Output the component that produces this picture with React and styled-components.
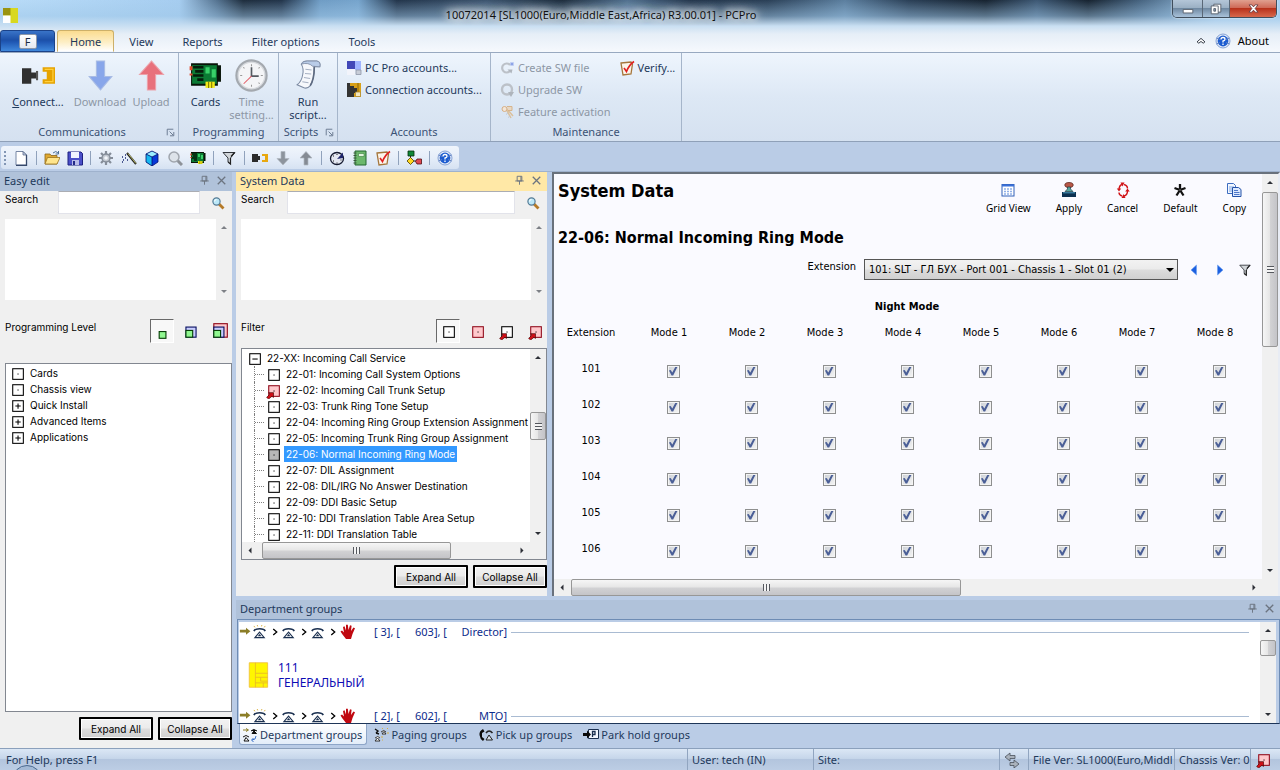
import React, { useState } from 'react'
import styled, { createGlobalStyle, css } from 'styled-components'

const tree = [
    { id: '22-01', name: 'Incoming Call System Options', mark: 'box' },
    { id: '22-02', name: 'Incoming Call Trunk Setup', mark: 'pinkLink' },
    { id: '22-03', name: 'Trunk Ring Tone Setup', mark: 'box' },
    { id: '22-04', name: 'Incoming Ring Group Extension Assignment', mark: 'box' },
    { id: '22-05', name: 'Incoming Trunk Ring Group Assignment', mark: 'box' },
    { id: '22-06', name: 'Normal Incoming Ring Mode', mark: 'greyBox' },
    { id: '22-07', name: 'DIL Assignment', mark: 'box' },
    { id: '22-08', name: 'DIL/IRG No Answer Destination', mark: 'box' },
    { id: '22-09', name: 'DDI Basic Setup', mark: 'box' },
    { id: '22-10', name: 'DDI Translation Table Area Setup', mark: 'box' },
    { id: '22-11', name: 'DDI Translation Table', mark: 'box' },
]

const easyItems = [
    ['Cards', 'box'],
    ['Chassis view', 'box'],
    ['Quick Install', 'plus'],
    ['Advanced Items', 'plus'],
    ['Applications', 'plus'],
]

const tools = [
    'page', '|', 'folder', 'save', '|', 'gear', 'wand', 'cube', 'lens', 'card', '|', 'funnel', '|',
    'plug', 'downGrey', 'upGrey', '|', 'clockBlue', 'book', 'verify', '|', 'flow', '|', 'help',
]

const extensions = [101, 102, 103, 104, 105, 106]
const modes = [1, 2, 3, 4, 5, 6, 7, 8]

const marker = (fill, stroke) => (
    <>
        <rect x="3.5" y="3.5" width="10" height="10" fill={fill} stroke={stroke} />
        <rect x="8" y="8" width="1" height="1" fill="#000" />
    </>
)
const linkArrow = <path d="M3.500 10h4.500v4.500L6.500 13.500 3.500 16 1.500 14.500 4.500 11.500z" fill="#d01018" stroke="#400" strokeWidth=".6" />
const phone = (
    <>
        <path d="M1 6.500Q2 4 7 4t6 2.500" fill="none" stroke="#1b3050" strokeWidth="1.800" />
        <path d="M7 7.500L2 13.500h10z" fill="#fff" stroke="#1b3050" strokeWidth="1.200" />
        <path d="M5 12l2-2.500L9 12z" fill="#1b3050" />
    </>
)

// every drawing sits on a 16x16 grid
const icons = {
    logo: (
        <>
            <path d="M0 0h16v16H0z" fill="#d8d820" />
            <path d="M0 0h8v8H0z" fill="#9a9410" />
            <path d="M0 8h8v8H0z" fill="#fff" />
        </>
    ),
    page: (
        <>
            <path d="M3 1.500h7l3.500 3.500v10H3z" fill="#fff" stroke="#7787a5" />
            <path d="M13.500 5v10.500H3" fill="none" stroke="#37496b" strokeWidth="1.300" />
            <path d="M10 1.500V5h3.500z" fill="#c5d0e5" stroke="#4b5c7e" strokeWidth=".7" />
        </>
    ),
    folder: (
        <>
            <path d="M1 4h5l1 1.500h6V14H1z" fill="#e0a830" stroke="#8a6416" strokeWidth=".8" />
            <path d="M3.500 7.500H16L13 14H1z" fill="#ffe58c" stroke="#9a7420" strokeWidth=".8" />
            <path d="M9 3q3-3 5 0M14.500 1v3h-3" fill="none" stroke="#4c7098" />
        </>
    ),
    save: (
        <>
            <path d="M1 2h13l1.500 1.500V15H1z" fill="#4a4fc8" stroke="#1d2080" />
            <path d="M4 2h8v6H4z" fill="#f0f4ff" />
            <path d="M5 10h7v5H5z" fill="#b8bce8" />
            <path d="M6 11h2v4H6z" fill="#222a88" />
        </>
    ),
    gear: (
        <>
            <path d="M8 1v14M1 8h14M3 3l10 10M13 3L3 13" stroke="#858d99" strokeWidth="2.200" />
            <circle cx="8" cy="8" r="4" fill="#c2c8d0" stroke="#858d99" strokeWidth="1.400" />
            <circle cx="8" cy="8" r="1.800" fill="#f3f6fb" />
        </>
    ),
    wand: (
        <>
            <path d="M6 3l9 11" stroke="#222" strokeWidth="2" />
            <path d="M7 3.500l8 10" stroke="#d8d870" strokeWidth=".8" />
            <path d="M4 5h1M1 7h1M4 8h1M2 10h1M6 10h1M1 12h1" stroke="#1a2a70" strokeWidth="1.300" />
        </>
    ),
    cube: (
        <>
            <path d="M8 1l6 3v8l-6 4-6-4V4z" fill="#0838d8" />
            <path d="M8 1l6 3-6 3-6-3z" fill="#9beeff" />
            <path d="M2 4l6 3v9l-6-4z" fill="#18b8f0" />
            <path d="M8 1l6 3v8l-6 4-6-4V4zM2 4l6 3 6-3M8 7v9" fill="none" stroke="#04106c" strokeWidth=".8" />
        </>
    ),
    lens: (
        <>
            <path d="M10 10l5 5" stroke="#8d9299" strokeWidth="3" />
            <circle cx="7" cy="7" r="5" fill="#dde3ea" stroke="#a0a6ae" strokeWidth="1.500" />
        </>
    ),
    search: (
        <>
            <path d="M9 9l4.500 4.500" stroke="#b57a28" strokeWidth="2.800" />
            <circle cx="6.500" cy="6.500" r="3.600" fill="#bce8f8" stroke="#557b95" strokeWidth="1.200" />
            <path d="M4.500 6.500q0-2 2-2" fill="none" stroke="#fff" />
        </>
    ),
    card: (
        <>
            <path d="M1 2h13v1h1.500v8H14v2H1z" fill="#081408" />
            <path d="M1.500 3h12v9h-12z" fill="#0b7a34" />
            <path d="M2 4h5M3 6h4M2 8h5M4 10h3" stroke="#041c0a" strokeWidth="1.300" />
            <path d="M8 4h2v3H8zM11 5h2v4h-2z" fill="#38d068" />
            <path d="M1 3.500v2M1 7v1" stroke="#e04828" strokeWidth="1.400" />
            <path d="M8 11h4.500v3H8z" fill="#f0e818" />
            <path d="M9.500 11v3M11 11v3" stroke="#807800" strokeWidth=".5" />
        </>
    ),
    funnel: (
        <>
            <path d="M2 2.500h12L9.500 8v6L7 12V8z" fill="#d2d6da" stroke="#32363c" />
            <path d="M9.500 8v6L7 12M10 6.500l3.500-4" fill="none" stroke="#222" strokeWidth="1.200" />
        </>
    ),
    plug: (
        <>
            <path d="M0 4h6v2h2v4H6v2H0z" fill="#2b2b2b" />
            <path d="M10 4h6v8h-6v-2h3V6h-3z" fill="#e8a810" />
        </>
    ),
    plugBig: (
        <>
            <path d="M0 4.500h4.500v2H7v3H4.500v2.500H0z" fill="#303030" />
            <path d="M6.800 5.800h1v4.500h-1z" fill="#555" />
            <path d="M10 4h6v8h-6V9.800h2V6.200h-2z" fill="#e6a300" />
            <path d="M11 5h4v6h-4" fill="none" stroke="#ffcf3c" strokeWidth=".6" />
        </>
    ),
    down: <path d="M6 1h4v7.500h3.500L8 15 2.500 8.500H6z" fill="#88a6ea" stroke="#a8bbe4" strokeWidth=".5" />,
    up: <path d="M6 15h4V7.500h3.800L8 1 2.200 7.500H6z" fill="#e8717c" stroke="#eca2aa" strokeWidth=".5" />,
    downGrey: <path d="M6 1.500h4v7h4L8 15 2 8.500h4z" fill="#8d949d" stroke="#b0b7c0" strokeWidth=".7" />,
    upGrey: <path d="M6 15h4V8h4L8 1.500 2 8h4z" fill="#858b94" stroke="#b0b7c0" strokeWidth=".7" />,
    clock: (
        <>
            <circle cx="8" cy="8" r="7.200" fill="#f4f5f7" stroke="#a4a9af" strokeWidth="1.300" />
            <circle cx="8" cy="8" r="6.500" fill="none" stroke="#d6d9dd" strokeWidth=".6" />
            <path d="M8 2.500v1M8 12.500v1M2.500 8h1M12.500 8h1M4 4l.6.6M12 4l-.6.600M12 12l-.6-.6" stroke="#999" strokeWidth=".5" />
            <path d="M8 4v4.300h3.500" fill="none" stroke="#555b62" strokeWidth=".8" />
            <path d="M8 8.300L4.200 12" stroke="#e25c66" strokeWidth=".5" />
        </>
    ),
    clockBlue: (
        <>
            <ellipse cx="8" cy="8.500" rx="6.500" ry="6" fill="#e4e8f2" stroke="#151a30" strokeWidth="1.300" />
            <path d="M8 9l6-6.500V8z" fill="#20266c" />
            <path d="M4 6h1M4 11h1M8 4v1M8 12.500v1M11.500 10h1" stroke="#222" />
        </>
    ),
    script: (
        <>
            <path d="M4.500 2.500Q5.500.8 7.500 1H12q2 .3 1.500 2.800h-2.700q0 6.200-2 9.200-1.500 1.700-3.300.8L2.500 12.500q2.200-1.700 2.700-5 .6-3-.7-5z" fill="#f6f8fc" stroke="#7d8ba3" strokeWidth=".5" />
            <path d="M4.500 2.500Q5.500.8 7.500 1H12q2 .3 1.500 2.800L10 3.500Q8 1.500 4.500 2.500z" fill="#b9cce8" stroke="#7d8ba3" strokeWidth=".4" />
            <path d="M10.800 3.800q0 6.200-2 9.200" fill="none" stroke="#5d6a80" strokeWidth=".8" />
            <path d="M6.500 5l3 .3M6.300 7l3 .3M5.800 9l3 .4M5 11l3 .5" stroke="#a6b0c2" strokeWidth=".5" />
        </>
    ),
    accounts: (
        <>
            <path d="M1 1h8v8H1z" fill="#4248b8" />
            <path d="M9 1h6v9H9z" fill="#9fb4ff" />
            <path d="M1 9h8v6H1z" fill="#f2f4fb" />
            <path d="M10 10h5v4.500h-5z" fill="#c8cdd8" stroke="#8f98a8" strokeWidth=".8" />
        </>
    ),
    connAccounts: (
        <>
            <path d="M1 1h14v14H1z" fill="#d8a018" />
            <path d="M1 1h3v3h4v2h3v5H8v4H1z" fill="#333" />
            <path d="M12 1v9" stroke="#8a6408" />
            <path d="M9.500 10h5v4.500h-5z" fill="#f3e7c0" stroke="#b08a2c" strokeWidth=".8" />
        </>
    ),
    swirl: (
        <>
            <path d="M11 5A4.500 4.500 0 1 0 11 11" fill="none" stroke="#bcc1c8" strokeWidth="2.200" />
            <path d="M8.500 9.500h5l-1 4z" fill="#b0b6be" />
            <path d="M13 2v4M11 4h4M11.600 2.600l2.800 2.800M14.400 2.600l-2.800 2.800" stroke="#8aa2e8" strokeWidth=".9" />
        </>
    ),
    upgrade: (
        <>
            <circle cx="8" cy="7.500" r="5" fill="none" stroke="#bcc1c8" strokeWidth="2.400" />
            <path d="M9 10h6l-3 5z" fill="#aeb4bc" />
        </>
    ),
    key: (
        <>
            <path d="M7 5l5 9M8 5l6 7" fill="none" stroke="#dbc09c" strokeWidth="1.500" />
            <path d="M8 2.500h5v4H9" fill="#e8d8c4" stroke="#d6b48c" />
            <circle cx="5.500" cy="5" r="2.500" fill="#f3e6d8" stroke="#d6ae84" />
            <path d="M9 9l-2 1.500M11 12l-2 1.500" stroke="#c4c8d0" />
        </>
    ),
    verify: (
        <>
            <path d="M2 3l10-1 1.500 2-1.500 10-8 1z" fill="#fbf4ea" stroke="#a5763c" strokeWidth="1.300" />
            <path d="M5 8l2.500 3.500Q10 5 15 1.500" fill="none" stroke="#e02020" strokeWidth="1.600" />
        </>
    ),
    book: (
        <>
            <path d="M3 1h11v14H3z" fill="#6cb86c" stroke="#246830" />
            <path d="M6.500 3.500h5.500v3H6.500z" fill="#e0f4dc" stroke="#3c8040" strokeWidth=".6" />
            <path d="M1.500 3h3M1.500 5.500h3M1.500 8h3M1.500 10.500h3M1.500 13h3" stroke="#3a5a3a" />
        </>
    ),
    flow: (
        <>
            <path d="M2 1h6v5H2z" fill="#108838" stroke="#06300e" strokeWidth=".8" />
            <path d="M4.500 6v4M8 11h3" stroke="#222" />
            <path d="M4.500 7.500L8 11l-3.500 3.500L1 11z" fill="#ffd820" stroke="#4a3a00" strokeWidth=".8" />
            <path d="M11 9h4.500v5H11L9.500 11.500z" fill="#e04850" stroke="#501014" strokeWidth=".8" />
        </>
    ),
    help: (
        <>
            <circle cx="8" cy="8" r="7" fill="#e4ecf8" stroke="#6f8fcc" strokeWidth=".8" />
            <circle cx="8" cy="8" r="5.400" fill="#1c5cd0" />
            <path d="M1.500 5L5 6.500M14.500 5L11 6.500M1.500 11L5 9.500M14.500 11L11 9.500" stroke="#5f81c4" />
            <path d="M6 6.500Q6 4.500 8 4.500t2 1.700Q10 7.500 8 8v1.500M8 10.500v1.500" fill="none" stroke="#fff" strokeWidth="1.300" />
        </>
    ),
    pin: (
        <>
            <path d="M5.500 3.500h5v5h-5zM9.500 3.500v5M3.500 8.500h9M8 8.500v4" fill="none" stroke="#6c7480" />
        </>
    ),
    close: <path d="M4 4l8 8M12 4l-8 8" stroke="#6c7480" strokeWidth="1.400" />,
    box: marker('#fff', '#000'),
    greyBox: marker('#b8b8b8', '#000'),
    pinkBox: marker('#ffc8cc', '#900818'),
    boxLink: <>{marker('#fff', '#000')}{linkArrow}</>,
    pinkLink: <>{marker('#ffc8cc', '#900818')}{linkArrow}</>,
    plus: (
        <>
            <rect x="3.500" y="3.500" width="10" height="10" fill="#fff" stroke="#000" />
            <path d="M6 8.500h5M8.500 6v5" stroke="#000" />
        </>
    ),
    minus: (
        <>
            <rect x="3.500" y="3.500" width="10" height="10" fill="#fff" stroke="#000" />
            <path d="M6 8.500h5" stroke="#000" />
        </>
    ),
    level1: <rect x="5.500" y="8.500" width="6" height="6" fill="#90f890" stroke="#064006" />,
    level2: (
        <>
            <rect x="3.500" y="4.500" width="9" height="9" fill="#c8ccff" stroke="#081060" />
            <rect x="3.500" y="7.500" width="6" height="6" fill="#90f890" stroke="#064006" />
        </>
    ),
    level3: (
        <>
            <rect x="2.500" y="1.500" width="12" height="12" fill="#ffc8cc" stroke="#900818" />
            <rect x="2.500" y="4.500" width="9" height="9" fill="#c8ccff" stroke="#081060" />
            <rect x="2.500" y="7.500" width="6" height="6" fill="#90f890" stroke="#064006" />
        </>
    ),
    grid: (
        <>
            <rect x="2" y="2.500" width="12" height="11.500" fill="#fff" stroke="#3060b8" />
            <path d="M2 3.500h12" stroke="#3a70d8" strokeWidth="2" />
            <path d="M4 7h2M7 7h2M10 7h2M4 9.500h2M7 9.500h2M10 9.500h2M4 12h2M7 12h2M10 12h2" stroke="#90b0e8" strokeWidth="1.300" />
        </>
    ),
    stamp: (
        <>
            <ellipse cx="8" cy="3" rx="4.200" ry="2.500" fill="#b85848" stroke="#501810" strokeWidth=".7" />
            <path d="M6.500 5h3v2l2.500 2.500H4L6.500 7z" fill="#58a8a0" stroke="#1c3844" strokeWidth=".7" />
            <path d="M1 10h14v5H1z" fill="#0c3050" />
            <path d="M2 10.800h12" stroke="#4c9cc0" />
        </>
    ),
    cycle: (
        <>
            <path d="M7 2.500Q4 3.500 4 8M9 2.500q3.500 1 3.500 4M7 14Q4 13 4 10.500M9 14q3.500-1 3.500-5" fill="none" stroke="#d01418" strokeWidth="1.400" />
            <path d="M5.500.5h4L7.500 4.500zM10.500 16H6.500l2-4zM1.800 6.500h4.400L4 9.500zM10.200 9.500h4.500l-2.200-3z" fill="#d01418" />
        </>
    ),
    star: (
        <>
            <path d="M8 7.500V2M8 8L2.500 6M8 8l5.500-2M8 8l-3.500 5.500M8 8l3.500 5.500" stroke="#111" strokeWidth="2.300" />
            <circle cx="8" cy="8" r=".8" fill="#888" />
        </>
    ),
    copy: (
        <>
            <path d="M1.500 1.500h6l2 2v8h-8z" fill="#f2f7ff" stroke="#3c6cc0" />
            <path d="M3 5h5M3 7h5M3 9h5" stroke="#7ea4e0" />
            <path d="M6.500 5.500h6l2.500 2v7H6.500z" fill="#dce9ff" stroke="#2452a8" />
            <path d="M8 8.500h4M8 10.500h5.500M8 12.500h5.500" stroke="#5078c8" />
        </>
    ),
    prev: <path d="M10.500 3v10L5 8z" fill="#1c60e0" stroke="#6ca0f0" strokeWidth=".6" />,
    next: <path d="M5.500 3v10L11 8z" fill="#1c60e0" stroke="#6ca0f0" strokeWidth=".6" />,
    launcher: (
        <path d="M4.500 11V4.500H11M7 7l4 4M11.500 7.500v4h-4" fill="none" stroke="#66768e" />
    ),
    chevron: <path d="M3.500 9L8 5l4.500 4-2 1.500L8 8.500l-2.500 2z" fill="#fff" stroke="#1d2430" />,
    minimise: <path d="M2.500 8.500h11v4h-11z" fill="#fff" stroke="#535c68" />,
    restore: (
        <>
            <path d="M5.500 2.500h8v9h-8z" fill="#fff" stroke="#535c68" />
            <path d="M2.500 4.500h8v9h-8z" fill="#fff" stroke="#535c68" />
            <path d="M5.500 7.500h2v3h-2z" fill="#8ba0b8" stroke="#535c68" />
        </>
    ),
    exit: <path d="M2.500 3.500H6l2 2.500 2-2.500h3.500L10 8l3.500 4.500H10L8 10l-2 2.500H2.500L6 8z" fill="#fff" stroke="#63343a" />,
    arrow: <path d="M1 5.500h7V3L13 7 8 11V8.500H1z" fill="#8c7e28" />,
    phone,
    ringing: (
        <>
            {phone}
            <path d="M2 2.500L1 1M5 1.500L4.500 0M9 1.500l.5-1.500M12 2.500L13 1" stroke="#d8b040" />
        </>
    ),
    hand: (
        <path d="M6 15L2.500 10.500.5 7.500 2 6.500l2 2L3 3l1.500-.8L6 6.500V.8h1.800L8.500 6 10 1.200l1.600.5L11 7l2.500-3.500 1.500.8L12.500 10 11 15z" fill="#c00810" />
    ),
    cardYellow: (
        <>
            <path d="M3 1h10.500v14H3z" fill="#fff600" stroke="#f0c040" strokeWidth=".5" />
            <path d="M6.500 1v14M6.500 7h7M6.500 9.300h7M9.500 9.300v2.200h4M6.500 12.500h7M11 12.500V15" fill="none" stroke="#e8b828" strokeWidth=".5" />
        </>
    ),
    dept: (
        <>
            <path d="M1 3h5M4 1.500L6.500 3 4 4.500" stroke="#8c7e28" fill="none" />
            <path d="M9 4q2.500-3 6 0M10 6.500L12 4l2.500 2.500z" fill="#111" stroke="#111" />
            <path d="M1 10q3-3 6 0M2 14l2-3.500L7 14z" fill="#fff" stroke="#111" />
            <path d="M14 9q0 4-4 4M11.500 11L9.500 13l2 2" fill="none" stroke="#3a70c8" />
        </>
    ),
    paging: (
        <>
            <path d="M2 2l3 2-2 2M6 7L3 6" fill="none" stroke="#111" strokeWidth="1.400" />
            <path d="M8 5q3-3 5 0M9 7l2-2.500L13 7z" fill="#fff" stroke="#333" />
            <path d="M2 11q3-3 5 0M2 14l2.500-3L7 14z" fill="#fff" stroke="#333" />
            <path d="M9 1l1 1M14 2l1-1M14 6h2M8 10h2M9 13h1" stroke="#d8b040" />
        </>
    ),
    pickup: (
        <>
            <path d="M5 2Q1 4 1.500 8T5 14l1.500-2L4 10V6l2.500-1.500z" fill="#0a0a0a" />
            <path d="M8 6q3-4 6.500 0" fill="none" stroke="#222" strokeWidth="1.500" />
            <path d="M11 8l-3 5h6.500z" fill="#d8e0ea" stroke="#222" />
        </>
    ),
    park: (
        <>
            <path d="M5.500 2.500h10v9h-10z" fill="#f4f8ff" stroke="#1b3050" />
            <path d="M9.500 10V4.500h2.500v3H9.500" fill="none" stroke="#1b3050" strokeWidth="1.300" />
            <path d="M0 6h4V3.500L8 7.500l-4 4V9H0z" fill="#0a0a0a" />
        </>
    ),
    swap: (
        <>
            <path d="M6 1v2.500h5v3H6V9L1 5z" fill="#aab2bc" stroke="#4a525c" strokeWidth=".8" />
            <path d="M10 8v2.500H6v3h4V16l5-4z" fill="#aab2bc" stroke="#4a525c" strokeWidth=".8" />
        </>
    ),
    gt: <path d="M6 4.500l4 3.500-4 3.500" fill="none" stroke="#000" strokeWidth="1.500" />,
}

function Icon({ name, size = 16 }) {
    return (
        <Svg viewBox="0 0 16 16" $size={size} aria-hidden="true">
            {icons[name]}
        </Svg>
    )
}

function Scroll({ horizontal, before = 0, thumb = 0, after = 0, grip, idle }) {
    return (
        <Bar $h={horizontal}>
            <Arrow $dir={horizontal ? 'left' : 'up'} $idle={idle} aria-label="Scroll back" />
            <Track $grow={before} />
            {thumb > 0 && <Thumb $h={horizontal} $grow={thumb}>{grip && <Grip $h={horizontal} />}</Thumb>}
            <Track $grow={after} />
            <Arrow $dir={horizontal ? 'right' : 'down'} $idle={idle} aria-label="Scroll forward" />
        </Bar>
    )
}

function DockHead({ title, active }) {
    return (
        <DockTitle $active={active}>
            <h2>{title}</h2>
            <IconButton aria-label={'Pin ' + title}><Icon name="pin" size={15} /></IconButton>
            <IconButton aria-label={'Close ' + title}><Icon name="close" size={15} /></IconButton>
        </DockTitle>
    )
}

function SearchBox({ id, left }) {
    return (
        <>
            <SearchRow $left={left}>
                <label htmlFor={id}>Search</label>
                <input id={id} type="text" />
                <IconButton aria-label="Search"><Icon name="search" /></IconButton>
            </SearchRow>
            <Results>
                <div />
                <Scroll idle after={1} />
            </Results>
        </>
    )
}

function Ribbon() {
    return (
        <RibbonBar>
            <Group $width={179}>
                <GroupBody>
                    <BigButton $width={62}><Icon name="plugBig" size={33} /><span><u>C</u>onnect...</span></BigButton>
                    <BigButton $width={62} disabled><Icon name="down" size={33} /><span>Download</span></BigButton>
                    <BigButton $width={40} disabled><Icon name="up" size={33} /><span>Upload</span></BigButton>
                </GroupBody>
                <GroupName $launch><span>Communications</span><IconButton aria-label="Communications options"><Icon name="launcher" size={15} /></IconButton></GroupName>
            </Group>
            <Group $width={100}>
                <GroupBody>
                    <BigButton $width={46}><Icon name="card" size={33} /><span>Cards</span></BigButton>
                    <BigButton $width={46} disabled><Icon name="clock" size={33} /><span>Time<br />setting...</span></BigButton>
                </GroupBody>
                <GroupName><span>Programming</span></GroupName>
            </Group>
            <Group $width={59}>
                <GroupBody>
                    <BigButton $width={50}><Icon name="script" size={33} /><span>Run<br />script...</span></BigButton>
                </GroupBody>
                <GroupName $launch><span>Scripts</span><IconButton aria-label="Script options"><Icon name="launcher" size={15} /></IconButton></GroupName>
            </Group>
            <Group $width={153}>
                <SmallColumns>
                    <div>
                        <SmallButton><Icon name="accounts" />PC Pro accounts...</SmallButton>
                        <SmallButton><Icon name="connAccounts" />Connection accounts...</SmallButton>
                    </div>
                </SmallColumns>
                <GroupName><span>Accounts</span></GroupName>
            </Group>
            <Group $width={191}>
                <SmallColumns>
                    <div>
                        <SmallButton disabled><Icon name="swirl" />Create SW file</SmallButton>
                        <SmallButton disabled><Icon name="upgrade" />Upgrade SW</SmallButton>
                        <SmallButton disabled><Icon name="key" />Feature activation</SmallButton>
                    </div>
                    <div>
                        <SmallButton><Icon name="verify" />Verify...</SmallButton>
                    </div>
                </SmallColumns>
                <GroupName><span>Maintenance</span></GroupName>
            </Group>
        </RibbonBar>
    )
}

function EasyEdit() {
    return (
        <LeftDock>
            <DockHead title="Easy edit" />
            <SearchBox id="easy-search" left={54} />
            <FilterRow>
                <span>Programming Level</span>
                <Toggle $on aria-label="Level 1"><Icon name="level1" size={18} /></Toggle>
                <Toggle aria-label="Level 2"><Icon name="level2" size={18} /></Toggle>
                <Toggle aria-label="Level 3"><Icon name="level3" size={18} /></Toggle>
            </FilterRow>
            <TreeFrame $top={20}>
                <TreeList>
                    {easyItems.map(([name, mark]) => (
                        <TreeItem key={name} $indent={3}><Icon name={mark} size={17} /><span>{name}</span></TreeItem>
                    ))}
                </TreeList>
            </TreeFrame>
            <ButtonRow>
                <PushButton>Expand All</PushButton>
                <PushButton>Collapse All</PushButton>
            </ButtonRow>
        </LeftDock>
    )
}

function SystemTree({ selected, onSelect }) {
    return (
        <TreeDock>
            <DockHead title="System Data" active />
            <SearchBox id="system-search" left={47} />
            <FilterRow>
                <span>Filter</span>
                <Toggle $on aria-label="All"><Icon name="box" size={17} /></Toggle>
                <Toggle aria-label="Changed"><Icon name="pinkBox" size={17} /></Toggle>
                <Toggle aria-label="Linked"><Icon name="boxLink" size={17} /></Toggle>
                <Toggle aria-label="Changed and linked"><Icon name="pinkLink" size={17} /></Toggle>
            </FilterRow>
            <TreeFrame $top={5}>
                <TreeView>
                    <TreeList>
                        <TreeItem $indent={4}><Icon name="minus" size={17} /><span>22-XX: Incoming Call Service</span></TreeItem>
                        {tree.map((t) => (
                            <TreeItem key={t.id} $indent={12} $selected={t.id === selected} onClick={() => onSelect(t.id)}>
                                <Stem />
                                <Icon name={t.mark} size={17} />
                                <span>{t.id}: {t.name}</span>
                            </TreeItem>
                        ))}
                    </TreeList>
                    <Scroll before={48} thumb={27} after={88} grip />
                </TreeView>
                <ScrollFoot><Scroll horizontal before={4} thumb={188} after={64} grip /><i /></ScrollFoot>
            </TreeFrame>
            <ButtonRow>
                <PushButton>Expand All</PushButton>
                <PushButton>Collapse All</PushButton>
            </ButtonRow>
        </TreeDock>
    )
}

function Editor() {
    return (
        <Main>
            <MainView>
                <Sheet>
                    <TopRow>
                        <h1>System Data</h1>
                        <Actions>
                            <button><Icon name="grid" />Grid View</button>
                            <button><Icon name="stamp" />Apply</button>
                            <button><Icon name="cycle" />Cancel</button>
                            <button><Icon name="star" />Default</button>
                            <button><Icon name="copy" />Copy</button>
                        </Actions>
                    </TopRow>
                    <PageName>22-06: Normal Incoming Ring Mode</PageName>
                    <Picker>
                        <label htmlFor="extension">Extension</label>
                        <SelectWrap>
                            <select id="extension">
                                <option>101: SLT - ГЛ БУХ - Port 001 - Chassis 1 - Slot 01 (2)</option>
                            </select>
                        </SelectWrap>
                        <Steps>
                            <IconButton aria-label="Previous"><Icon name="prev" /></IconButton>
                            <IconButton aria-label="Next"><Icon name="next" /></IconButton>
                            <IconButton aria-label="Filter"><Icon name="funnel" size={14} /></IconButton>
                        </Steps>
                    </Picker>
                    <ModeTable>
                        <thead>
                            <tr><ModeTitle colSpan={9}>Night Mode</ModeTitle></tr>
                            <tr>
                                <th scope="col">Extension</th>
                                {modes.map((m) => <th scope="col" key={m}>Mode {m}</th>)}
                            </tr>
                        </thead>
                        <tbody>
                            {extensions.map((ext) => (
                                <tr key={ext}>
                                    <th scope="row">{ext}</th>
                                    {modes.map((m) => (
                                        <td key={m}><Check type="checkbox" defaultChecked aria-label={`${ext} mode ${m}`} /></td>
                                    ))}
                                </tr>
                            ))}
                        </tbody>
                    </ModeTable>
                </Sheet>
                <Scroll before={1} thumb={154} after={217} grip />
            </MainView>
            <ScrollFoot><Scroll horizontal before={1} thumb={390} after={286} grip /><i /></ScrollFoot>
        </Main>
    )
}

function HuntLine({ count, number, name }) {
    return (
        <Hunt>
            <Icon name="arrow" size={14} />
            <Icon name="ringing" size={15} />
            <Icon name="gt" size={14} />
            <Icon name="phone" size={15} />
            <Icon name="gt" size={14} />
            <Icon name="phone" size={15} />
            <Icon name="gt" size={14} />
            <Icon name="hand" size={16} />
            <HuntText>
                <span>[ {count}], [</span>
                <span>{number}], [</span>
                <span>{name}]</span>
            </HuntText>
            <Rule />
        </Hunt>
    )
}

function Departments() {
    return (
        <BottomDock>
            <DockHead title="Department groups" />
            <GroupFrame>
                <GroupList>
                    <HuntLine count={3} number={603} name="Director" />
                    <Member>
                        <Icon name="cardYellow" size={28} />
                        <p>111<br />ГЕНЕРАЛЬНЫЙ</p>
                    </Member>
                    <HuntLine count={2} number={602} name="MTO" />
                </GroupList>
                <Scroll before={1} thumb={14} after={52} />
            </GroupFrame>
            <BottomTabs>
                <BottomTab $on><Icon name="dept" />Department groups</BottomTab>
                <BottomTab><Icon name="paging" />Paging groups</BottomTab>
                <BottomTab><Icon name="pickup" />Pick up groups</BottomTab>
                <BottomTab><Icon name="park" />Park hold groups</BottomTab>
            </BottomTabs>
        </BottomDock>
    )
}

function App() {
    const [selected, setSelected] = useState('22-06')

    return (
        <Window>
            <GlobalStyle />
            <Glass>
                <TitleBar>
                    <Icon name="logo" size={15} />
                    <h1>10072014 [SL1000(Euro,Middle East,Africa) R3.00.01] - PCPro</h1>
                    <Caption>
                        <CapButton $width={29} aria-label="Minimise"><Icon name="minimise" size={14} /></CapButton>
                        <CapButton $width={27} aria-label="Restore"><Icon name="restore" size={14} /></CapButton>
                        <CapButton $width={47} $red aria-label="Close"><Icon name="exit" size={13} /></CapButton>
                    </Caption>
                </TitleBar>
                <TabStrip>
                    <FileTab><span>F</span></FileTab>
                    <Tab $on>Home</Tab>
                    <Tab>View</Tab>
                    <Tab>Reports</Tab>
                    <Tab>Filter options</Tab>
                    <Tab>Tools</Tab>
                    <TabTail>
                        <IconButton aria-label="Collapse ribbon"><Icon name="chevron" size={14} /></IconButton>
                        <IconButton aria-label="Help"><Icon name="help" /></IconButton>
                        <a href="#about">About</a>
                    </TabTail>
                </TabStrip>
            </Glass>
            <Ribbon />
            <ToolBar>
                <ToolSet>
                    <Handle />
                    {tools.map((t, i) => (
                        t === '|' ? <Divider key={i} /> : <IconButton key={i} aria-label={t}><Icon name={t} /></IconButton>
                    ))}
                </ToolSet>
            </ToolBar>
            <Workspace>
                <EasyEdit />
                <SystemTree selected={selected} onSelect={setSelected} />
                <Editor />
                <Departments />
            </Workspace>
            <Status>
                <StatusCell $grow>For Help, press F1</StatusCell>
                <StatusCell $width={126}>User: tech (IN)</StatusCell>
                <StatusCell $width={186}>Site:</StatusCell>
                <StatusCell $width={29}><Icon name="swap" /></StatusCell>
                <StatusCell $width={146}>File Ver: SL1000(Euro,Middl</StatusCell>
                <StatusCell $width={76}>Chassis Ver: 0</StatusCell>
                <StatusCell $width={30}><Icon name="pinkLink" size={17} /></StatusCell>
                <Orb />
            </Status>
        </Window>
    )
}

export default App

const ribbonFont = '"Noto Sans", sans-serif'
const treeFont = 'Inter, "Liberation Sans", sans-serif'
const pageFont = '"DejaVu Sans Condensed", "DejaVu Sans", sans-serif'

const GlobalStyle = createGlobalStyle`
* {
    box-sizing: border-box;
}
body {
    margin: 0;
    font: 11px/16px ${ribbonFont};
    color: #1e395b;
}
h1, h2, p, ul {
    margin: 0;
    padding: 0;
    font-weight: normal;
    font-size: inherit;
}
button {
    font: inherit;
    color: inherit;
    background: none;
    border: 0;
    padding: 0;
}
`
const Svg = styled.svg`
display: block;
flex: none;
width: ${props => props.$size}px;
height: ${props => props.$size}px;
`
const Window = styled.div`
display: flex;
flex-direction: column;
height: 100vh;
min-height: 600px;
overflow: hidden;
background: #bacce6;
`
const IconButton = styled.button`
display: flex;
align-items: center;
justify-content: center;
flex: none;
`

/* title bar and ribbon tabs */
const Glass = styled.header`
background:
    linear-gradient(to bottom, transparent 0, rgba(160, 200, 232, .5) 16px, #c9dff2 26px, #e6eef7 34px, #f6f9fd 52px),
    linear-gradient(to right, #b9dcf8 0, #a6cdf0 14%, #53718e 17%, #1d2c3c 19%, #22344a 22%, #6f9cc4 25%, #76a4cc 28%,
        #22344a 31%, #3b536d 38%, #1d2c3c 44%, #51708f 49%, #22344a 54%, #2a3f56 60%, #5c7f9f 66%, #2a3f56 71%,
        #16222f 77%, #3d5874 81%, #16222f 85%, #45627e 89%, #9cc6ea 95%, #a8d2f4 100%);
`
const TitleBar = styled.div`
display: flex;
align-items: flex-start;
height: 30px;
padding: 0 3px;
> svg {
    margin-top: 8px;
}
h1 {
    flex: 1;
    margin-top: 7px;
    padding-left: 12px;
    text-align: center;
    color: #111;
    font-size: 11px;
    text-shadow: 0 0 6px #fff, 0 0 8px #fff, 0 0 12px #fff, 0 0 16px #fff;
}
`
const Caption = styled.div`
display: flex;
height: 18px;
border: 1px solid #414e5c;
border-top: 0;
border-radius: 0 0 5px 5px;
overflow: hidden;
box-shadow: 0 0 2px #fff;
`
const CapButton = styled.button`
display: flex;
align-items: center;
justify-content: center;
width: ${props => props.$width}px;
background: ${props => props.$red
        ? 'linear-gradient(#e0a090, #cf6a58 45%, #b8321c 50%, #d8684c)'
        : 'linear-gradient(#b4c6d8, #9bb0c4 45%, #7089a2 50%, #a9c2da)'};
& + & {
    border-left: 1px solid #5a6877;
}
`
const TabStrip = styled.nav`
display: flex;
height: 23px;
border-bottom: 1px solid #98a9c0;
`
const FileTab = styled.button`
width: 55px;
margin-right: 2px;
background: linear-gradient(#3a74c8, #1c50a8 45%, #2058b4 55%, #3f88dc);
border: 1px solid #1b4288;
border-radius: 3px 3px 0 0;
span {
    display: block;
    width: 18px;
    margin: 0 auto;
    line-height: 13px;
    color: #1b2b45;
    background: linear-gradient(#fff, #e4e8f0);
    border: 1px solid #8b97aa;
    border-radius: 2px;
}
`
const Tab = styled.button`
padding: 2px 13px 0 14px;
border: 1px solid transparent;
border-radius: 3px 3px 0 0;
${props => props.$on && css`
    padding: 2px 12px 0;
    border-color: #cdb069;
    border-bottom-color: #f4f8fd;
    background: linear-gradient(#fbdc90, #fdeec4 55%, #fff);
`}
`
const TabTail = styled.div`
display: flex;
align-items: center;
gap: 7px;
margin-left: auto;
padding-right: 11px;
a {
    color: #000;
    text-decoration: none;
}
`
const RibbonBar = styled.section`
display: flex;
height: 89px;
background: linear-gradient(#eef5fd, #dde8f5 50%, #d5e1f0);
border-bottom: 1px solid #8fa0b8;
`
const Group = styled.div`
display: flex;
flex-direction: column;
width: ${props => props.$width}px;
border-right: 1px solid #a5b5ca;
padding-top: 3px;
`
const GroupBody = styled.div`
display: flex;
justify-content: center;
flex: 1;
`
const BigButton = styled.button`
display: flex;
flex-direction: column;
align-items: center;
width: ${props => props.$width}px;
padding-top: 3px;
line-height: 13px;
white-space: nowrap;
span {
    margin-top: 3px;
}
&:disabled {
    color: #8d97a5;
}
`
const GroupName = styled.div`
display: flex;
align-items: center;
height: 18px;
color: #3b5275;
span {
    flex: 1;
    text-align: center;
    padding-left: ${props => props.$launch ? 2 : 0}px;
}
button {
    width: 16px;
}
`
const SmallColumns = styled.div`
display: flex;
flex: 1;
gap: 8px;
padding-left: 8px;
`
const SmallButton = styled.button`
display: flex;
align-items: center;
gap: 3px;
height: 22px;
padding-top: 2px;
white-space: nowrap;
&:disabled {
    color: #8d97a5;
}
`
const ToolBar = styled.div`
display: flex;
height: 30px;
padding: 4px 1px 2px;
border-bottom: 1px solid #9fb2cd;
`
const ToolSet = styled.div`
display: flex;
align-items: center;
gap: 7px;
padding: 0 6px 0 3px;
background: linear-gradient(#f0f5fc, #e6eef9 50%, #d6e2f2);
border-radius: 3px;
`
const Handle = styled.i`
width: 2px;
height: 14px;
background: repeating-linear-gradient(#8296b4 0 2px, transparent 2px 4px);
`
const Divider = styled.i`
width: 1px;
height: 14px;
background: #90a2bc;
`

/* docked panels */
const Workspace = styled.main`
display: grid;
grid-template-columns: 232px 311px minmax(0, 1fr);
grid-template-rows: minmax(0, 1fr) 148px;
column-gap: 4px;
row-gap: 4px;
flex: 1;
min-height: 0;
`
const Dock = styled.section`
display: flex;
flex-direction: column;
min-height: 0;
background: #f0f0f0;
font-family: ${treeFont};
font-size: 10px;
color: #000;
`
const LeftDock = styled(Dock)`
grid-row: 1 / 3;
padding-bottom: 8px;
`
const TreeDock = styled(Dock)`
padding-bottom: 8px;
`
const BottomDock = styled(Dock)`
grid-column: 2 / 4;
background: #bacce6;
font-family: ${ribbonFont};
font-size: 11px;
`
const DockTitle = styled.header`
display: flex;
align-items: center;
gap: 2px;
flex: none;
height: 19px;
padding: 0 3px 2px 4px;
font-family: ${ribbonFont};
font-size: 11px;
color: #1e395b;
background: ${props => props.$active ? '#ffe8a6' : '#b0c2da'};
h2 {
    flex: 1;
}
`
const SearchRow = styled.div`
display: flex;
flex: none;
height: 23px;
padding: 0 6px 0 5px;
label {
    width: ${props => props.$left - 1}px;
}
input {
    flex: 1;
    min-width: 0;
    margin-right: 10px;
    background: #fff;
    border: 1px solid #e2e3ea;
    border-top-color: #abadb3;
}
`
const Results = styled.div`
display: flex;
flex: none;
height: 81px;
margin: 5px 0 0 5px;
background: #fff;
div:first-child {
    flex: 1;
}
`
const FilterRow = styled.div`
display: flex;
flex: none;
gap: 5px;
margin: 19px 0 0 5px;
height: 24px;
span {
    flex: 1;
}
`
const Toggle = styled.button`
display: flex;
align-items: center;
justify-content: center;
width: 24px;
border: 1px solid transparent;
${props => props.$on && css`
    background: #f8f8f8;
    border-color: #696969 #fff #fff #696969;
`}
`
const TreeFrame = styled.div`
display: flex;
flex-direction: column;
flex: 1;
min-height: 0;
margin: ${props => props.$top}px 0 0 5px;
background: #fff;
border: 1px solid #828790;
`
const TreeView = styled.div`
display: flex;
flex: 1;
min-height: 0;
`
const TreeList = styled.ul`
flex: 1;
min-width: 0;
overflow: hidden;
list-style: none;
padding-top: 1px;
`
const TreeItem = styled.li`
display: flex;
align-items: center;
height: 16px;
padding-left: ${props => props.$indent}px;
white-space: nowrap;
span {
    padding: 0 2px;
    margin-left: 2px;
    ${props => props.$selected && css`
        color: #fff;
        background: #3399ff;
    `}
}
`
const Stem = styled.i`
flex: none;
width: 11px;
height: 16px;
border-left: 1px dotted #808080;
background: repeating-linear-gradient(to right, #808080 0 1px, transparent 1px 2px) 0 8px / 100% 1px no-repeat;
`
const ButtonRow = styled.div`
display: flex;
justify-content: flex-end;
flex: none;
gap: 5px;
margin-top: 5px;
`
const PushButton = styled.button`
width: 74px;
height: 23px;
white-space: nowrap;
background: linear-gradient(#f2f2f2, #ebebeb 48%, #dddddd 52%, #cfcfcf);
border: 2px solid #000;
border-radius: 1px;
box-shadow: inset 0 0 0 1px #fff;
`

/* scroll bars */
const Bar = styled.div`
display: flex;
flex: ${props => props.$h ? '1' : 'none'};
flex-direction: ${props => props.$h ? 'row' : 'column'};
${props => props.$h ? 'height: 17px;' : 'width: 16px;'}
background: #f0f0f0;
`
const arrows = {
    up: '50% 35%, 80% 65%, 20% 65%',
    down: '20% 35%, 80% 35%, 50% 65%',
    left: '65% 20%, 65% 80%, 35% 50%',
    right: '35% 20%, 65% 50%, 35% 80%',
}
const Arrow = styled.button`
display: grid;
place-content: center;
flex: none;
width: 16px;
height: 17px;
&::after {
    content: '';
    width: 10px;
    height: 10px;
    background: ${props => props.$idle ? '#7d8086' : '#2c2f36'};
    clip-path: polygon(${props => arrows[props.$dir]});
}
`
const Track = styled.i`
flex: ${props => props.$grow} 1 0;
`
const Thumb = styled.div`
display: grid;
place-content: center;
flex: ${props => props.$grow} 1 0;
border: 1px solid #979797;
border-radius: 2px;
background: linear-gradient(${props => props.$h ? 'to bottom' : 'to right'}, #f6f6f6, #e6e6e6 48%, #d2d2d4 52%, #c4c4c8);
`
const Grip = styled.i`
width: 7px;
height: 7px;
background: repeating-linear-gradient(${props => props.$h ? 'to right' : 'to bottom'}, #55585e 0 1px, #f4f4f4 1px 3px);
`
const ScrollFoot = styled.div`
display: flex;
flex: none;
background: #f0f0f0;
> i {
    flex: none;
    width: 16px;
}
`

/* editor page */
const Main = styled.section`
display: flex;
flex-direction: column;
min-width: 0;
min-height: 0;
margin-left: 1px;
color: #000;
font-family: ${pageFont};
background: #fafaff;
border: 1px solid #69717c;
border-width: 2px 0 0 2px;
border-right: 2px solid #e8ecf4;
`
const MainView = styled.div`
display: flex;
flex: 1;
min-height: 0;
`
const Sheet = styled.div`
flex: 1;
min-width: 0;
overflow: hidden;
padding: 7px 0 0 4px;
`
const TopRow = styled.div`
display: flex;
justify-content: space-between;
padding-right: 16px;
h1 {
    font-size: 18px;
    line-height: 20px;
    font-weight: bold;
}
`
const Actions = styled.div`
display: flex;
gap: 25px;
padding-top: 1px;
button {
    display: flex;
    flex-direction: column;
    align-items: center;
    gap: 2px;
    font-family: ${ribbonFont};
    font-size: 10px;
}
`
const PageName = styled.h2`
margin-top: 12px;
font-size: 16px;
line-height: 20px;
font-weight: bold;
`
const Picker = styled.div`
display: flex;
align-items: center;
justify-content: flex-end;
gap: 8px;
margin-top: 11px;
padding-right: 10px;
label {
    align-self: flex-start;
}
`
const Steps = styled.div`
display: flex;
gap: 10px;
`
const SelectWrap = styled.div`
position: relative;
width: 314px;
select {
    display: block;
    width: 100%;
    height: 21px;
    padding: 0 20px 0 4px;
    appearance: none;
    color: #000;
    font: 11px ${pageFont};
    background: linear-gradient(#f2f2f2, #ebebeb 48%, #dcdcdc 52%, #d0d0d0);
    border: 1px solid #555;
    border-radius: 0;
}
&::after {
    content: '';
    position: absolute;
    right: 4px;
    top: 9px;
    border: 4px solid transparent;
    border-top-color: #000;
    pointer-events: none;
}
`
const ModeTable = styled.table`
margin: 15px 0 0 -6px;
width: 702px;
table-layout: fixed;
border-collapse: collapse;
th, td {
    height: 36px;
    padding: 0;
    font-weight: normal;
    text-align: center;
}
th {
    padding-bottom: 4px;
}
td {
    padding-left: 8px;
}
`
const ModeTitle = styled.th`
&& {
    height: 22px;
    padding: 2px 0 0 8px;
    font-weight: bold;
}
`
const Check = styled.input`
appearance: none;
display: inline-grid;
place-content: center;
width: 13px;
height: 13px;
margin: 0;
vertical-align: middle;
border: 1px solid #8e8f8f;
background: linear-gradient(135deg, #cbcfd5, #f6f6f6);
box-shadow: inset 0 0 0 1px #f4f4f4;
&:checked::after {
    content: '';
    width: 9px;
    height: 9px;
    background: #4b5f97;
    clip-path: polygon(5% 45%, 25% 40%, 42% 66%, 78% 0, 100% 4%, 52% 100%, 34% 100%);
}
`

/* department groups */
const GroupFrame = styled.div`
display: flex;
flex: none;
height: 105px;
margin-left: 1px;
padding: 2px 3px 0 1px;
border: 1px solid #6e8cb4;
border-bottom: 1px solid #1d3558;
`
const GroupList = styled.div`
flex: 1;
min-width: 0;
overflow: hidden;
background: #fff;
color: #0c2c8c;
`
const Hunt = styled.div`
display: flex;
align-items: center;
height: 20px;
padding: 0 11px 0 0;
`
const HuntText = styled.span`
display: grid;
grid-template-columns: 41px 34px 58px;
margin-left: 18px;
white-space: nowrap;
span:last-child {
    text-align: right;
}
`
const Rule = styled.i`
flex: 1;
height: 1px;
margin-left: 4px;
background: #a9bbd2;
`
const Member = styled.div`
display: flex;
align-items: center;
gap: 6px;
height: 64px;
padding: 2px 0 0 5px;
font-size: 12px;
color: #0c0cb4;
p {
    line-height: 15px;
}
`
const BottomTabs = styled.nav`
display: flex;
padding-left: 3px;
height: 21px;
gap: 3px;
`
const BottomTab = styled.button`
display: flex;
align-items: center;
gap: 2px;
padding: 2px 4px 0 2px;
color: #1e395b;
border: 1px solid transparent;
border-top: 0;
border-radius: 0 0 3px 3px;
${props => props.$on && css`
    background: linear-gradient(#fff, #e3edf9);
    border-color: #8ea6c8;
`}
`

const Status = styled.footer`
position: relative;
display: flex;
flex: none;
height: 22px;
overflow: hidden;
background: linear-gradient(#dbe7f5, #c6d6ea 45%, #b3c5de 50%, #bccde4);
border-top: 1px solid #8ba0bc;
`
const StatusCell = styled.div`
display: flex;
align-items: center;
overflow: hidden;
white-space: nowrap;
flex: ${props => props.$grow ? '1' : 'none'};
width: ${props => props.$width}px;
padding-left: ${props => props.$grow ? 6 : 4}px;
& + & {
    border-left: 1px solid #91a5c0;
}
`
/* start button peeking over the lower edge */
const Orb = styled.i`
position: absolute;
left: 12px;
top: 16px;
width: 30px;
height: 30px;
border: 1px solid #4a6a90;
border-radius: 50%;
background: #a3bad6;
`
